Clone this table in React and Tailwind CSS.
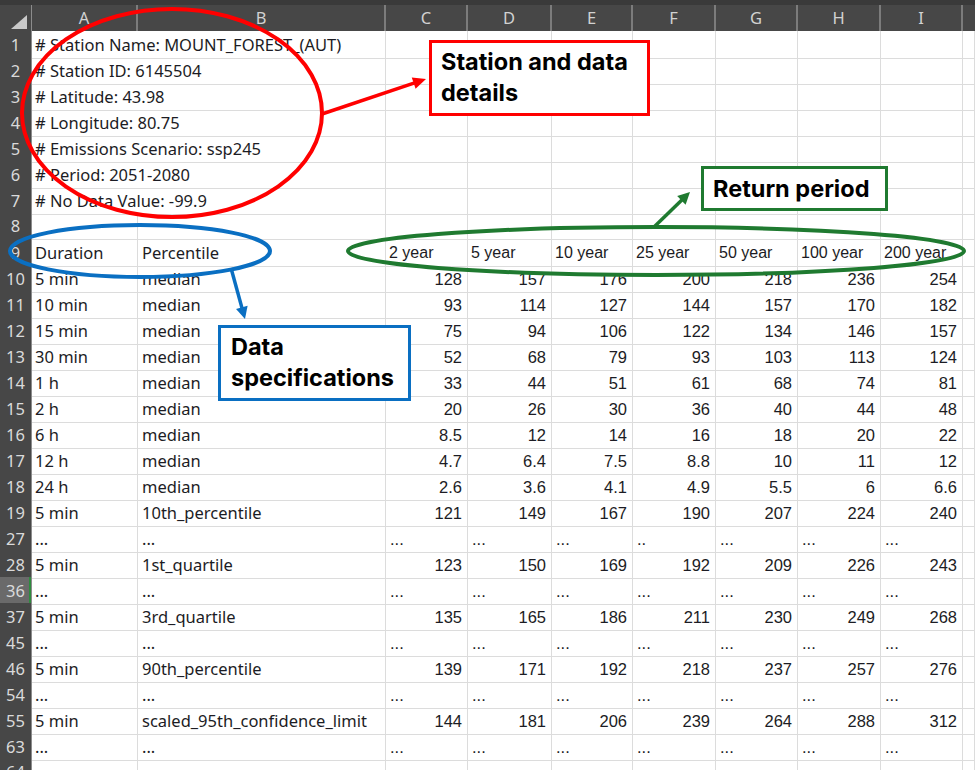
import React from 'react';

const info = [
  '# Station Name: MOUNT_FOREST_(AUT)',
  '# Station ID: 6145504',
  '# Latitude: 43.98',
  '# Longitude: 80.75',
  '# Emissions Scenario: ssp245',
  '# Period: 2051-2080',
  '# No Data Value: -99.9',
];

const DOTS = 'dots';
const data = [
  ['10', '5 min', 'median', ['128', '157', '176', '200', '218', '236', '254']],
  ['11', '10 min', 'median', ['93', '114', '127', '144', '157', '170', '182']],
  ['12', '15 min', 'median', ['75', '94', '106', '122', '134', '146', '157']],
  ['13', '30 min', 'median', ['52', '68', '79', '93', '103', '113', '124']],
  ['14', '1 h', 'median', ['33', '44', '51', '61', '68', '74', '81']],
  ['15', '2 h', 'median', ['20', '26', '30', '36', '40', '44', '48']],
  ['16', '6 h', 'median', ['8.5', '12', '14', '16', '18', '20', '22']],
  ['17', '12 h', 'median', ['4.7', '6.4', '7.5', '8.8', '10', '11', '12']],
  ['18', '24 h', 'median', ['2.6', '3.6', '4.1', '4.9', '5.5', '6', '6.6']],
  ['19', '5 min', '10th_percentile', ['121', '149', '167', '190', '207', '224', '240']],
  ['27', '...', '...', ['...', '...', '...', '..', '...', '...', '...'], DOTS],
  ['28', '5 min', '1st_quartile', ['123', '150', '169', '192', '209', '226', '243']],
  ['36', '...', '...', ['...', '...', '...', '...', '...', '...', '...'], DOTS, true],
  ['37', '5 min', '3rd_quartile', ['135', '165', '186', '211', '230', '249', '268']],
  ['45', '...', '...', ['...', '...', '...', '...', '...', '...', '...'], DOTS],
  ['46', '5 min', '90th_percentile', ['139', '171', '192', '218', '237', '257', '276']],
  ['54', '...', '...', ['...', '...', '...', '...', '...', '...', '...'], DOTS],
  ['55', '5 min', 'scaled_95th_confidence_limit', ['144', '181', '206', '239', '264', '288', '312']],
  ['63', '...', '...', ['...', '...', '...', '...', '...', '...', '...'], DOTS],
  ['64', '', '', ['', '', '', '', '', '', '']],
];

const ROW = 'grid grid-cols-[32px_106px_248px_82px_84px_81px_83px_82px_83px_82px_1fr] h-[26px]';
const APTOS = "font-['Noto_Sans',sans-serif]";
const ARIAL = "font-['Liberation_Sans',Arial,sans-serif]";
const CELL = 'border-r border-b border-[#dcdcdc] flex items-center whitespace-nowrap overflow-visible text-[#1c1c24] pt-[2px]';

function RowHead({ n, light }) {
  return (
    <div
      className={`${APTOS} flex items-center justify-center text-[16.5px] text-[#dadada] border-b border-[#6e6e6e] border-r border-[#8c8c8c] pt-[1px] ${
        light ? 'bg-[#6a6a6a] shadow-[inset_-2px_0_0_#2e8b3e]' : 'bg-[#474747]'
      }`}
    >
      {n}
    </div>
  );
}

function Arrow({ x1, y1, x2, y2, color, w = 3, head = 13, half = 6 }) {
  const dx = x2 - x1;
  const dy = y2 - y1;
  const len = Math.hypot(dx, dy);
  const ux = dx / len;
  const uy = dy / len;
  const bx = x2 - ux * head;
  const by = y2 - uy * head;
  const px = -uy;
  const py = ux;
  const pts = `${x2},${y2} ${bx + px * half},${by + py * half} ${bx - px * half},${by - py * half}`;
  return (
    <g>
      <line x1={x1} y1={y1} x2={bx + ux * 1} y2={by + uy * 1} stroke={color} strokeWidth={w} />
      <polygon points={pts} fill={color} />
    </g>
  );
}

export default function App() {
  const cols = ['A', 'B', 'C', 'D', 'E', 'F', 'G', 'H', 'I', ''];
  return (
    <div className="relative w-[975px] h-[770px] overflow-hidden bg-white">
      <div className="h-[5px] bg-[#3a3a3a]" />
      <div className={ROW}>
        <div className="relative bg-[#474747] border-r border-[#8c8c8c]">
          <svg className="absolute left-[11px] top-[10px]" width="16" height="14" viewBox="0 0 16 14">
            <polygon points="16,0 16,14 0,14" fill="#c9c9c9" />
          </svg>
        </div>
        {cols.map((c, i) => (
          <div
            key={i}
            className={`${APTOS} bg-[#474747] text-[#d2d2d2] text-[16.5px] flex items-center justify-center ${
              i < 9 ? 'border-r-2 border-[#7c7c7c]' : ''
            }`}
          >
            {c}
          </div>
        ))}
      </div>

      {info.map((t, i) => (
        <div key={i} className={ROW}>
          <RowHead n={String(i + 1)} />
          <div className={`${CELL} ${APTOS} col-span-2 text-[16.5px] pl-[3px]`}>{t}</div>
          {Array.from({ length: 8 }).map((_, j) => (
            <div key={j} className={CELL} />
          ))}
        </div>
      ))}

      <div className={ROW}>
        <RowHead n="8" />
        {Array.from({ length: 10 }).map((_, j) => (
          <div key={j} className={CELL} />
        ))}
      </div>

      <div className={ROW}>
        <RowHead n="9" />
        <div className={`${CELL} ${APTOS} text-[16.5px] pl-[3px]`}>Duration</div>
        <div className={`${CELL} ${APTOS} text-[16.5px] pl-[4px]`}>Percentile</div>
        {['2 year', '5 year', '10 year', '25 year', '50 year', '100 year', '200 year'].map((t, j) => (
          <div key={j} className={`${CELL} ${ARIAL} text-[16px] pl-[3px]`}>
            {t}
          </div>
        ))}
        <div className={CELL} />
      </div>

      {data.map(([n, a, b, vals, dots, light]) => (
        <div key={n} className={ROW}>
          <RowHead n={n} light={light} />
          <div className={`${CELL} ${APTOS} text-[16.5px] pl-[3px]`}>{a}</div>
          <div className={`${CELL} ${APTOS} text-[16.5px] pl-[4px]`}>{b}</div>
          {vals.map((v, j) => (
            <div
              key={j}
              className={`${CELL} ${ARIAL} text-[16.5px] ${dots ? 'justify-start pl-[4px]' : 'justify-end pr-[5px]'}`}
            >
              {v}
            </div>
          ))}
          <div className={CELL} />
        </div>
      ))}

      <svg className="absolute left-0 top-0 pointer-events-none" width="975" height="770" viewBox="0 0 975 770">
        <ellipse cx="172" cy="113" rx="150" ry="104" fill="none" stroke="#ff0000" strokeWidth="4" />
        <Arrow x1={322} y1={114} x2={426} y2={79} color="#ff0000" w={3.5} />
        <ellipse cx="656" cy="251" rx="308" ry="24" fill="none" stroke="#1f7a30" strokeWidth="4" />
        <Arrow x1={654} y1={227} x2={690} y2={192} color="#1f7a30" w={3.5} head={12} />
        <ellipse cx="140" cy="251" rx="130" ry="26" fill="none" stroke="#0a6fc2" strokeWidth="4" />
        <Arrow x1={231} y1={268} x2={245} y2={319} color="#0a6fc2" w={3.5} head={12} />
      </svg>

      <div className="absolute left-[429px] top-[40px] w-[221px] h-[76px] border-[3px] border-[#ff0000] bg-white pl-[9px] pt-[3px]">
        <div className="font-['Inter',sans-serif] font-bold text-[23.5px] leading-[31px] text-black">
          Station and data
          <br />
          details
        </div>
      </div>

      <div className="absolute left-[701px] top-[166px] w-[187px] h-[45px] border-[3px] border-[#1f7a30] bg-white pl-[9px] flex items-center">
        <div className="font-['Inter',sans-serif] font-bold text-[23.5px] leading-[31px] text-black">Return period</div>
      </div>

      <div className="absolute left-[218px] top-[325px] w-[193px] h-[76px] border-[3px] border-[#0a6fc2] bg-white pl-[10px] pt-[3px]">
        <div className="font-['Inter',sans-serif] font-bold text-[23.5px] leading-[31px] text-black">
          Data
          <br />
          specifications
        </div>
      </div>
    </div>
  );
}
